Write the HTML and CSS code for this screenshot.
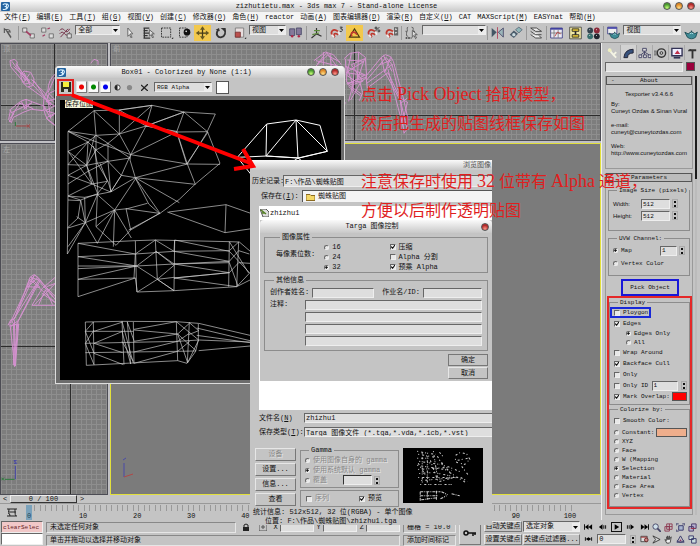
FILE: index.html
```html
<!DOCTYPE html>
<html lang="zh-CN">
<head>
    <meta charset="UTF-8">
    <meta name="viewport" content="width=device-width, initial-scale=1.0">
    <title>zizhutietu.max - 3ds max 7 - Stand-alone License</title>
    <link rel="stylesheet" href="styles.css">
</head>
<body>
    <!-- 公用图形 -->
    <svg class="defs" width="0" height="0" aria-hidden="true">
        <symbol id="logo" viewBox="0 0 10 10">
            <rect width="10" height="10" rx="1" fill="#2464a0"/>
            <path d="M2 3q3-2 4 0t-2 2q3 0 2 2t-4 1M6 2q3 1 2 3t-2 3" fill="none" stroke="#d8f0ff" stroke-width="1.2"/>
        </symbol>
        <symbol id="magnet" viewBox="0 0 18 16">
            <path d="M4 11C1 6 5 3 9 5l3 2M7 13c-2-3-1-5 2-4l2 1" fill="none" stroke="#c0392f" stroke-width="2"/>
            <path d="M3 10l3 3M11 6l2 4" stroke="#eee" stroke-width="2"/>
        </symbol>
        <symbol id="teapot" viewBox="0 0 18 16">
            <path d="M1 7l4 2q4-4 8 0l3-2-2 6q-5 4-10 0z" fill="#3f8b96" stroke="#184850"/>
            <path d="M7 9q2-2 4 0" stroke="#b8ecf0" fill="none"/>
            <circle cx="9" cy="6" r="1" fill="#184850"/>
        </symbol>
    </svg>

    <div class="app">
        <header class="titlebar">
            <svg class="logo"><use href="#logo"/></svg>
            <h1>zizhutietu.max - 3ds max 7 - Stand-alone License</h1>
            <div class="lights">
                <button class="light green" aria-label="最小化"></button>
                <button class="light orange" aria-label="最大化"></button>
                <button class="light red" aria-label="关闭"></button>
            </div>
        </header>

        <nav class="menu">
            <a href="#">文件(<u>F</u>)</a>
            <a href="#">编辑(<u>E</u>)</a>
            <a href="#">工具(<u>T</u>)</a>
            <a href="#">组(<u>G</u>)</a>
            <a href="#">视图(<u>V</u>)</a>
            <a href="#">创建(<u>C</u>)</a>
            <a href="#">修改器(<u>O</u>)</a>
            <a href="#">角色(<u>H</u>)</a>
            <a href="#">reactor</a>
            <a href="#">动画(<u>A</u>)</a>
            <a href="#">图表编辑器(<u>D</u>)</a>
            <a href="#">渲染(<u>R</u>)</a>
            <a href="#">自定义(<u>U</u>)</a>
            <a href="#">CAT</a>
            <a href="#">MAXScript(<u>M</u>)</a>
            <a href="#">EASYnat</a>
            <a href="#">帮助(<u>H</u>)</a>
        </nav>

        <div class="toolbar">
            <button class="tool" aria-label="撤销"><svg viewBox="0 0 18 16"><path d="M4 8V3l3 2M5 4q6-1 6 3L7 6l5 8M8 7l4 6" fill="none" stroke="#555" stroke-width="1.3"/></svg></button>
            <i class="sep"></i>
            <button class="tool" aria-label="链接"><svg viewBox="0 0 18 16"><path d="M2 2h5v5H2zM11 9h5v5h-5z" fill="#ddd" stroke="#666"/><path d="M6 6l6 5" stroke="#a34064" stroke-width="2"/></svg></button>
            <button class="tool" aria-label="取消链接"><svg viewBox="0 0 18 16"><path d="M2 2h5v5H2zM11 9h5v5h-5z" fill="#ddd" stroke="#666"/><path d="M9 3l3-1M6 10l-3 2" stroke="#a34064" stroke-width="1.5"/></svg></button>
            <button class="tool" aria-label="绑定"><svg viewBox="0 0 18 16"><path d="M2 5q3-4 6 0t6-2M2 9q3-4 6 0t6-2M3 13l9-10" fill="none" stroke="#77384e" stroke-width="1.2"/><path d="M11 9h5v5h-5z" fill="#ddd" stroke="#555"/></svg></button>
            <select class="filter" aria-label="选择过滤器"><option>全部</option></select>
            <button class="tool" aria-label="选择"><svg viewBox="0 0 18 16"><path d="M7 2v10l2-2 2 4 1-1-2-4h3z" fill="#eee" stroke="#555"/></svg></button>
            <button class="tool" aria-label="按名称选择"><svg viewBox="0 0 18 16"><path d="M3 2h7M3 5h5M3 8h7M3 11h5M3 14h8M4 2v12" stroke="#333" stroke-width="1.5"/><path d="M10 4v8l2-2 2 4 1-1-2-4h3z" fill="#ddd" stroke="#555"/></svg></button>
            <button class="tool" aria-label="矩形区域"><svg viewBox="0 0 18 16"><path d="M3 2h11v11H3z" fill="none" stroke="#222" stroke-dasharray="2 1"/><path d="M15 15h2v-2z"/></svg></button>
            <button class="tool" aria-label="窗口交叉"><svg viewBox="0 0 18 16"><path d="M3 2h9v11H3z" fill="none" stroke="#222" stroke-dasharray="2 1"/><circle cx="12" cy="7" r="4" fill="#111"/><circle cx="11" cy="6" r="1" fill="#eee"/></svg></button>
            <button class="tool on" aria-label="移动"><svg viewBox="0 0 18 16"><path d="M9 2v12M3 8h12" stroke="#443a18" stroke-width="1.5"/><path d="M9 0l3 4H6zM9 16l3-4H6zM1 8l4-3v6zM17 8l-4-3v6z" fill="#665722"/></svg></button>
            <button class="tool" aria-label="旋转"><svg viewBox="0 0 18 16"><path d="M5 4c-4 6 0 10 4 9s6-6 3-10" fill="none" stroke="#333" stroke-width="2.2"/><path d="M8 2h6v5zM2 4l4-2 1 4z" fill="#333"/></svg></button>
            <button class="tool" aria-label="缩放"><svg viewBox="0 0 18 16"><path d="M4 2h10v11H4z" fill="#e8dede" stroke="#777"/><path d="M4 7h6v6H4z" fill="#bb4f4c" stroke="#733"/><path d="M15 15h2v-2z"/></svg></button>
            <select class="coords" aria-label="参考坐标系"><option>视图</option></select>
            <button class="tool" aria-label="轴点"><svg viewBox="0 0 18 16"><path d="M2 3h6v8H2zM10 2h6v8h-6z" fill="#85799a" stroke="#444666"/><circle cx="5" cy="12" r="1.5" fill="#b02848"/><circle cx="13" cy="12" r="1.5" fill="#b02848"/></svg></button>
            <i class="sep"></i>
            <button class="tool" aria-label="操纵"><svg viewBox="0 0 18 16"><path d="M9 2v7l6 3M9 9l-6 5" fill="none" stroke="#333" stroke-width="1.4"/><path d="M6 5h7M4 10l8-2" stroke="#5c8a3a" stroke-width="1.5"/></svg></button>
            <i class="sep"></i>
            <button class="tool" aria-label="捕捉"><svg viewBox="0 0 18 16"><use href="#magnet"/><path d="M13 1h3L14 3q3 0 2 2t-3 1" fill="none" stroke="#222"/></svg></button>
            <button class="tool on" aria-label="角度捕捉"><svg viewBox="0 0 18 16"><path d="M3 13L9 3l6 10z" fill="none" stroke="#4a3a10" stroke-width="1.4"/><path d="M6 12c-3-5 3-7 6-2" fill="none" stroke="#c0392f" stroke-width="2"/></svg></button>
            <button class="tool" aria-label="百分比捕捉"><svg viewBox="0 0 18 16"><use href="#magnet"/><path d="M11 6l5-5" stroke="#222"/><circle cx="12" cy="2" r="1.2" fill="none" stroke="#222"/><circle cx="15.500" cy="5.500" r="1.200" fill="none" stroke="#222"/></svg></button>
            <button class="tool" aria-label="微调器捕捉"><svg viewBox="0 0 18 16"><use href="#magnet"/><path d="M12 1h5v10h-5z" fill="#666"/><path d="M13 4l1-2 2 2zM13 7l1 2 2-2z" fill="#eee"/></svg></button>
            <i class="sep"></i>
            <button class="tool" aria-label="命名选择集"><svg viewBox="0 0 18 16"><path d="M5 1Q3 1 4 4T2 6q2 0 1 3t2 3M9 1q3 0 2 3t2 2q-2 0-1 3" fill="none" stroke="#555"/><path d="M10 5v8l2-2 2 4 1-1-2-4h3z" fill="#ddd" stroke="#555"/><path d="M2 14h7" stroke="#333" stroke-width="2" stroke-dasharray="2 1"/></svg></button>
            <select class="sets" aria-label="选择集"><option></option></select>
            <i class="sep"></i>
            <button class="tool" aria-label="镜像"><svg viewBox="0 0 18 16"><path d="M2 2l6 5-6 6z" fill="#445765"/><path d="M16 2l-6 5 6 6z" fill="#9bb5b9" stroke="#446"/><path d="M9 1v14" stroke="#b23c55"/></svg></button>
            <button class="tool" aria-label="对齐"><svg viewBox="0 0 18 16"><path d="M2 10l5-5 5 4-5 5z" fill="#4b5c6b"/><path d="M9 4l4-3 4 3-4 4z" fill="#8fb6b8" stroke="#567"/><circle cx="7" cy="10" r="2" fill="#c9dadf"/></svg></button>
            <i class="sep"></i>
            <button class="tool" aria-label="层"><svg viewBox="0 0 18 16"><path d="M2 2h7l6 4H8zM2 6l6 4h7M2 10l6 4h7l-3-3" fill="#eee" stroke="#333"/></svg></button>
            <i class="sep"></i>
            <button class="tool" aria-label="曲线编辑器"><svg viewBox="0 0 18 16"><path d="M2 2h14v12H2z" fill="#eaeaf4" stroke="#3c3c84"/><path d="M2 3h14" stroke="#4040a0" stroke-width="2"/><path d="M6 4v10M2 8h14M11 4v10" stroke="#777"/><path d="M7 12l3-5 4 2" stroke="#b33" fill="none"/></svg></button>
            <button class="tool" aria-label="图解视图"><svg viewBox="0 0 18 16"><path d="M2 1h14v14H2z" fill="#efe6a3" stroke="#444"/><path d="M5 3h8v3H5zM5 10h8v3H5z" fill="#e9c936" stroke="#222"/><path d="M9 6v4" stroke="#222" stroke-width="2"/></svg></button>
            <button class="tool" aria-label="材质编辑器"><svg viewBox="0 0 18 16"><circle cx="5" cy="5" r="3.500" fill="#33424d"/><circle cx="13" cy="5" r="3.500" fill="#8b2839"/><circle cx="5" cy="12" r="3.500" fill="#376e6e"/><circle cx="13" cy="12" r="3.500" fill="#20252f"/><path d="M4 4h1M12 4h1M4 11h1M12 11h1" stroke="#fff"/></svg></button>
            <i class="sep"></i>
            <button class="tool" aria-label="渲染场景"><svg viewBox="0 0 18 16"><path d="M2 1h11v8H2z" fill="#eee" stroke="#3c3c84"/><path d="M2 2h11" stroke="#44a" stroke-width="2"/><use href="#teapot" x="3" y="2" width="15" height="14"/></svg></button>
            <select class="render" aria-label="渲染类型"><option>视图</option></select>
            <button class="tool" aria-label="快速渲染"><svg viewBox="0 0 18 16"><use href="#teapot"/></svg></button>
        </div>

        <div class="main">
            <div class="stage">
                <div class="viewports">
                    <section class="viewport top" aria-label="顶">
                        <svg class="scene" width="108" height="98" viewBox="0 9 324 294">
                            <g class="wire">
                                <path d="M30 62l14-4 8 8-2 12 40 50-14 4-44-52zM36 64l42 60M48 70l34 50M40 80l50 42M62 105l10-12 20 4 10 20-4 20-16 4-14-14zM66 108l34 28M72 98l18 38M90 100L70 128M94 118l68 70M98 134l58 62M84 140l70 50M102 122l50 76"/>
                                <path d="M26 238l6-30 30-24 16-6 20 8 38 14-6 12-36-4-22 8-32 16-6 16zM30 236l30-48M34 218l62-30M64 184l12 24M78 178l2 30M60 190l40 16M96 188l-26 20M28 210l14 14M28 246l14-28"/>
                                <path d="M168 100q-24 20-24 50l-12 24q-6 40 12 66l20 16M164 112l-20 46 20 20-26 6 26 14-28 14 28 8-26 14 26 20M138 184l10-24 16-8M134 202l16 30 14-10M142 166l10 70M272 70l10-12 12 4v12"/>
                            </g>
                            <path class="axis-x" d="M48 258h40m-8-5l10 10m0-10l-10 10"/>
                            <path class="axis-y" d="M46 258v-12"/>
                            <text x="10" y="32" class="vp-name">顶</text>
                        </svg>
                    </section>
                    <section class="viewport front" aria-label="前">
                        <svg class="scene" width="489" height="98" viewBox="-690 9 1467 294">
                            <g class="wire">
                                <path d="M12 56l18-16 26-4 20 16 4 60-20 16 8 30-10 24M16 56l4 70 18 10-12 48M34 40l-14 66 30 20 24-70-40 18 34 50-30 10-18-56M56 36l-4 84 26-8M22 60l50 4-54 34 56 8-52 26 42 30M20 130l50-8M26 140l36 28M60 130l-28 50M44 70l-6 90M14 78l64 28"/>
                                <path d="M78 108l46-56 12-8 16 6 8 14 30 110 12 54-2 40-8 12-12-106-36-76-62 46zM80 120l58-68 18 22-76 56M124 52l10 46 18-46M130 46l26 48M120 74l34-14M136 98l48 90M144 88l48 182M156 72l44 190M184 176l20 12M182 190l20-16M190 236l12-48"/>
                                <path d="M-78 62l34-26 24 8 24 30M-68 72l28-34 40 54M-78 84l40-38 38 20M-50 36v40M-30 40l4 50M-72 62l66 16M14 130l-14 44 16 14-14 26"/>
                            </g>
                            <text x="-680" y="32" class="vp-name">前</text>
                        </svg>
                    </section>
                    <section class="viewport left" aria-label="左">
                        <svg class="scene" width="108" height="351" viewBox="0 309 324 1053">
                            <g class="wire">
                                <path d="M24 856l8-16 12-4 46-124 12-8 12 8 58 74M30 850l52-110 22-36 16 18-66 122-10 136-14-128zM42 838l60-130M52 848l64-128-24-8 28 30-40-2M36 846l70-110M28 858l28-6-10 126-6-126M44 840l-4 136M50 850l-6 124M34 846l20 12M54 842l-22 18M82 742l28-26 50 56M76 750l14-32 76 70M118 720l48 50"/>
                                <path d="M96 796l30-50 42-36M96 796h70M104 794l60-62M116 794l20-44 22 44M126 760l40 28M140 740l26-10"/>
                            </g>
                            <path class="axis-z" d="M46 1318v-40m-4-8h8l-8-8h8"/>
                            <path class="axis-g" d="M44 1318H14m-10-5l8 8m-8 0l8-8"/>
                            <text x="10" y="336" class="vp-name">左</text>
                        </svg>
                    </section>
                    <section class="viewport persp" aria-label="透视">
                        <svg class="scene axis-only" width="40" height="40" viewBox="0 0 40 40">
                            <path d="M14 22V8m-1-3l3-2" stroke="#4a4aa8" fill="none"/>
                            <path d="M14 22l9-3" stroke="#b04848" fill="none"/>
                        </svg>
                    </section>
                </div>

                <div class="timeslider">
                    <button class="step" aria-label="上一帧">&lt;</button>
                    <button class="frame">0 / 100</button>
                    <button class="step" aria-label="下一帧">&gt;</button>
                </div>
                <div class="trackbar">
                    <svg class="curve" viewBox="0 0 10 9"><path d="M0 1h10M0 8h10M2 1q0 3-1 3h8M3 8q0-3-2-3M8 1v3q0 3 1 4" fill="none" stroke="#222"/></svg>
                    <div class="ruler">
                        <span class="now">0</span><span>10</span><span>20</span><span>30</span><span>40</span><span></span><span></span><span></span><span></span><span>90</span><span>100</span>
                    </div>
                </div>
            </div>

            <aside class="panel">
                <div class="tabs">
                    <button aria-label="创建"><svg viewBox="0 0 14 12"><path d="M3 2l5 6 3-3M8 8l3 3" fill="none" stroke="#f4f4e4" stroke-width="2"/><circle cx="4" cy="3" r="2" fill="#eeeec0"/></svg></button>
                    <button class="active" aria-label="修改"><svg viewBox="0 0 14 12"><path d="M2 11Q3 2 12 2v4Q6 6 6 11z" fill="#36517c" stroke="#223"/></svg></button>
                    <button aria-label="层次"><svg viewBox="0 0 14 12"><path d="M5 1h4v3H5zM1 8h3v3H1zM6 8h3v3H6zM11 8h3v3h-3zM7 4v4M7 5L3 8M7 5l5 3" fill="#ddd" stroke="#446"/></svg></button>
                    <button aria-label="运动"><svg viewBox="0 0 14 12"><circle cx="8" cy="6" r="4.500" fill="none" stroke="#333" stroke-width="1.500"/><circle cx="8" cy="6" r="1.500" fill="none" stroke="#333"/><path d="M0 4h3M0 6h3M0 8h3" stroke="#555"/></svg></button>
                    <button aria-label="显示"><svg viewBox="0 0 14 12"><path d="M2 1h11v8H2z" fill="#eef" stroke="#335" stroke-width="1.500"/><path d="M5 7l3-4 3 4z" fill="#c0304a"/><path d="M4 11h7" stroke="#335" stroke-width="2"/></svg></button>
                    <button aria-label="工具"><svg viewBox="0 0 14 12"><path d="M2 4q1-3 4-2h5v2H8v8H6V4z" fill="#333"/></svg></button>
                </div>
                <div class="objname">
                    <input type="text" aria-label="对象名称">
                    <button class="swatch wine" aria-label="对象颜色"></button>
                </div>

                <div class="rollouts">
                    <section class="rollout about">
                        <h2><span>-</span>About</h2>
                        <p class="center">Texporter v3.4.6.6</p>
                        <p>By:<br>Cuneyt Ozdas &amp; Sinan Vural</p>
                        <p>e-mail:<br>cuneyt@cuneytozdas.com</p>
                        <p>Web:<br>http://www.cuneytozdas.com</p>
                    </section>
                    <section class="rollout params">
                        <h2>Parameters</h2>
                        <fieldset class="size">
                            <legend>Image Size (pixels)</legend>
                            <label for="w">Width:</label><input class="spin" id="w" type="text" value="512"><i class="arrows"></i>
                            <label for="h">Height:</label><input class="spin" id="h" type="text" value="512"><i class="arrows"></i>
                        </fieldset>
                        <fieldset class="uvw">
                            <legend>UVW Channel:</legend>
                            <div class="row"><label><input type="radio" name="uvw" checked>Map</label><input class="spin short" type="text" value="1" aria-label="Map"><i class="arrows"></i></div>
                            <div class="row"><label><input type="radio" name="uvw">Vertex Color</label></div>
                        </fieldset>
                        <button class="pick">Pick Object</button>
                        <div class="redbox">
                            <fieldset class="display">
                                <legend>Display</legend>
                                <label class="bluebox"><input type="checkbox">Ploygon</label>
                                <label><input type="checkbox" checked>Edges</label>
                                <label class="sub"><input type="radio" name="edges" checked>Edges Only</label>
                                <label class="sub"><input type="radio" name="edges">All</label>
                                <label><input type="checkbox">Wrap Around</label>
                                <label><input type="checkbox" checked>Backface Cull</label>
                                <label><input type="checkbox">Only</label>
                                <div class="row"><label><input type="checkbox">Only ID</label><input class="spin" type="text" value="1" aria-label="ID"><i class="arrows"></i></div>
                                <div class="row"><label><input type="checkbox" checked>Mark Overlap:</label><button class="swatch pure" aria-label="重叠颜色"></button></div>
                            </fieldset>
                            <fieldset class="colorize">
                                <legend>Colorize by:</legend>
                                <label class="smooth"><input type="checkbox">Smooth Color:</label>
                                <div class="row"><label><input type="radio" name="by">Constant:</label><button class="swatch peach" aria-label="固定颜色"></button></div>
                                <label><input type="radio" name="by">XYZ</label>
                                <label><input type="radio" name="by">Face</label>
                                <label><input type="radio" name="by">W (Mapping</label>
                                <label><input type="radio" name="by" checked>Selection</label>
                                <label><input type="radio" name="by">Material</label>
                                <label><input type="radio" name="by">Face Area</label>
                                <label><input type="radio" name="by">Vertex</label>
                            </fieldset>
                        </div>
                    </section>
                </div>
            </aside>
        </div>

        <footer class="status">
            <div class="listener">
                <input class="macro" type="text" value="clearSelec" aria-label="宏录制器">
                <input type="text" aria-label="侦听器">
            </div>
            <div class="prompts">
                <div class="line">
                    <output class="cell grow">未选定任何对象</output>
                    <svg class="lock" viewBox="0 0 8 8"><path d="M2 4V2q2-2 4 0v2" fill="none" stroke="#222"/><path d="M1 4h6v4H1z" fill="#222"/></svg>
                    <svg class="lock" viewBox="0 0 8 8"><path d="M0 0h8v8H0zM4 2v4M2 4h4" fill="none" stroke="#555"/></svg>
                    <label class="xyz">X<input type="text"></label>
                    <label class="xyz">Y<input type="text"></label>
                    <label class="xyz">Z<input type="text"></label>
                    <output class="cell grid">栅格 = 10.0</output>
                </div>
                <div class="line">
                    <output class="cell grow">单击并拖动以选择并移动对象</output>
                    <output class="cell grid">添加时间标记</output>
                </div>
            </div>
            <button class="key" aria-label="设置关键点"><svg viewBox="0 0 14 8"><circle cx="3" cy="4" r="2" fill="none" stroke="#111" stroke-width="1.500"/><path d="M5 4h8M10 4v3M12 4v2" stroke="#111" stroke-width="1.500"/></svg></button>
            <div class="anim">
                <button>自动关键点</button>
                <select aria-label="关键点集"><option>选定对象</option></select>
                <button>设置关键点</button>
                <button>关键点过滤器...</button>
            </div>
            <div class="transport">
                <div class="line">
                    <button aria-label="转至开头"><svg viewBox="0 0 10 8"><path d="M0 1h1v6H0zM5 1v6L1 4zM9 1v6L5 4z"/></svg></button>
                    <button aria-label="上一帧"><svg viewBox="0 0 10 8"><path d="M5 1v6L1 4zM6 2h1v4H6zM8 2h1v4H8z"/></svg></button>
                    <button class="play" aria-label="播放"><svg viewBox="0 0 10 8"><path d="M3 1v6l5-3z"/></svg></button>
                    <button aria-label="下一帧"><svg viewBox="0 0 10 8"><path d="M5 1v6l4-3zM1 2h1v4H1zM3 2h1v4H3z"/></svg></button>
                    <button aria-label="转至结尾"><svg viewBox="0 0 10 8"><path d="M9 1h1v6H9zM1 1v6l4-3zM5 1v6l4-3z"/></svg></button>
                </div>
                <div class="line">
                    <button aria-label="关键点模式"><svg viewBox="0 0 10 8"><path d="M1 2h1v4H1zM5 2v4L2 4zM5 2v4l3-2zM8 2h1v4H8z"/></svg></button>
                    <input class="spin" type="text" value="0" aria-label="当前帧"><i class="arrows"></i>
                    <button aria-label="时间配置"><svg viewBox="0 0 10 8"><path d="M1 1h7v6H1z" fill="#ddd" stroke="#444"/><path d="M1 2h7" stroke="#a33"/><circle cx="7" cy="5" r="2" fill="#c88" stroke="#622"/></svg></button>
                </div>
            </div>
            <div class="nav">
                <button aria-label="缩放"><svg viewBox="0 0 10 10"><circle cx="4" cy="4" r="3" fill="#cfe0ea" stroke="#446"/><path d="M6 6l4 4" stroke="#446" stroke-width="2"/></svg></button>
                <button aria-label="缩放所有"><svg viewBox="0 0 10 10"><path d="M3 1h6v6H3zM1 4h5v5H1zM6 1v6M3 4h6" fill="none" stroke="#8c3850"/></svg></button>
                <button aria-label="最大化显示"><svg viewBox="0 0 10 10"><path d="M3 3h5v5H3z" fill="#a9b6d0" stroke="#336"/><path d="M0 3V1h3M7 1h3v2M0 7v2h3" fill="none" stroke="#336"/></svg></button>
                <button aria-label="所有视图最大化"><svg viewBox="0 0 10 10"><path d="M4 1h5v5H4zM1 4h5v5H1z" fill="#b7b3d0" stroke="#436"/><path d="M3 6h5" stroke="#a34"/></svg></button>
                <button aria-label="视野"><svg viewBox="0 0 10 10"><path d="M1 1l8 4-8 4 3-4z" fill="#ddd" stroke="#333"/></svg></button>
                <button aria-label="平移"><svg viewBox="0 0 10 10"><path d="M3 9L1 5l2 1V2l1 3V1l1 4 1-4v4l2-3-1 6-1 1z" fill="#eee" stroke="#444"/></svg></button>
                <button aria-label="弧形旋转"><svg viewBox="0 0 10 10"><path d="M5 1l4 7H1zM1 6q4 4 8 0" fill="none" stroke="#336"/><circle cx="5" cy="6" r="1" fill="#836"/></svg></button>
                <button aria-label="最大化视口"><svg viewBox="0 0 10 10"><path d="M1 1h5v4H1zM4 4h5v5H4z" fill="#cdd" stroke="#336"/></svg></button>
            </div>
        </footer>

        <!-- 位图窗口 -->
        <section class="window bitmap">
            <header class="titlebar">
                <svg class="logo"><use href="#logo"/></svg>
                <h1>Box01 - Colorized by None (1:1)</h1>
                <div class="lights">
                    <button class="light green" aria-label="最小化"></button>
                    <button class="light orange" aria-label="最大化"></button>
                    <button class="light red" aria-label="关闭"></button>
                </div>
            </header>
            <div class="bitmap-tools">
                <button class="save" aria-label="保存位图"><svg viewBox="0 0 10 10"><path d="M0 0h10v10H0z" fill="#2b2b1a"/><path d="M2 0h6v5H2z" fill="#f5ee3c"/><path d="M3 7h4v3H3z" fill="#ccc"/></svg></button>
                <button class="chan r" aria-label="红"></button>
                <button class="chan g" aria-label="绿"></button>
                <button class="chan b" aria-label="蓝"></button>
                <button class="plain" aria-label="Alpha"><svg viewBox="0 0 8 8"><circle cx="4" cy="4" r="3" fill="#eee" stroke="#333"/><path d="M4 1a3 3 0 0 0 0 6z" fill="#222"/></svg></button>
                <button class="plain" aria-label="单色"><svg viewBox="0 0 8 8"><circle cx="4" cy="4" r="3" fill="#888"/></svg></button>
                <button class="plain clear" aria-label="清除"><svg viewBox="0 0 8 8"><path d="M0 1l8 7M8 0L0 8" stroke="#222" stroke-width="1.500"/></svg></button>
                <select aria-label="通道"><option>RGB Alpha</option></select>
                <button class="swatch white" aria-label="颜色"></button>
            </div>
            <div class="canvas">
                <svg viewBox="30 120 843 840" width="281" height="280">
                    <g class="mesh">
                        <path d="M54 214l78-62 76-2 98-14 96 20 94 6-24 52 38 96-74 62-48 46-58 42-94 50M54 214v184l-2 184M54 214l84 12 70-4-76-70 6 74M208 150v72l98-86-18 62 114-42-22 60 92-1-70-59M306 136l-98 14 80 48 92 18M402 156l-114 42-80 24 34 62 46-86M288 198l92 16 32 98-170-28 138-68M380 216l30 96 64-96M472 215l-60 97 98 1M412 312l24 61-180-20 156-41M242 284l-2 16 16 53M242 284L54 214"/>
                        <path d="M54 274l60-28 24-20M54 274l56 42M54 214l60 32-4 70 16 56M54 314l56 2 24-88M54 346l56-30 30-6 34-6M54 346l72 26M54 372l60-38 60-30M54 408l72-36 46-8M54 408l50 4 36-8 40-8M114 246l24 24 36-20-36-24v44l-28 46M138 270l36 34V250l66 44-66 10M174 304l40 42-32 50-8-92M214 346l42 7-74 43M110 316l34 88-8-138M174 250l34-28M126 372l56 24 32-50 28-62M54 314l60-68M130 258l12 52 32 54 10 32M150 310l22 54-32 40M54 274l72 98"/>
                        <path d="M54 408l38 12 48-18 54 48 64-96 130 74M54 420l38 2-8 52-32 30M92 420l14 68 36-84M104 412l2 76 88-38 38-4 60-16M54 504l52-16M106 488l-54 94M142 404l-4 96 56-50 50 84M194 450l-4 110M138 500l60 56 44-46-14-64 100 14-86 50M106 488l36 62 52-100M54 560l52-72M256 354l40 78 34 30M256 354l74 106M80 470l26 18"/>
                        <path class="bright" d="M562 292l88-100 88-12 72 16 22 78-84 20-98-6zM650 192l-2 96 90-108 6 114M738 180l94 94M562 292l40 50M648 288l96 6 88-20M744 294l-90 60M744 294l80 60"/>
                        <path d="M356 456l172-22 80 28M528 434l-3 84 80-12M352 456l173 62"/>
                    </g>
                    <g class="mesh" transform="translate(0 480)">
                        <path d="M84 70l172-8 60-2 222 5 30 1 40 34M84 70v160l172-56 6 42 110-4 188-12 40-20M256 62l4 154M84 70l172 32 60-42 6 118-60 38M84 110l176 28M84 138h176M84 146l176-8-176 40 172-4M84 110l172-8 116-8 165-2M260 138l62 40 50-42-54-42-58 44 112-6M256 102l-4 72M316 60l56 34 2-34-2 152-50-34 50-6M318 94l54 38 166 26-166 16M372 94l166 30-166 8M374 60l164 34M372 132l166-4M372 174l188 26M538 65l-2 135M566 66l-6 134M538 65l58 94M538 92l28-26M538 124l28-32 32 10M538 158l28-30 34 2M560 200l40-42M538 128l26 70M538 94l62 66M322 178l50 34M372 174l166-16"/>
                        <path d="M106 306l110-2 163 1 66 5v50l-8 34-26 36-28-8-274 14zM130 306l2 128M216 304l6 130M232 305l10 127M250 306l2 124M379 305l4 117M418 307l-6 122M106 334h144M106 370l278-6 62-4M106 398l276-4 56-1M106 334l24-28M106 334l26 66M106 370l26 64M106 370l26-40M132 334l86-28M132 370l86-36M132 370l86 28M132 400l88 34M216 304l34 126M232 306l20 56M216 334l26 98M216 364l34 60M252 328l127-23M252 364l131-22M252 396l131-32M252 430l131-36M252 330l131 12 35-32M379 305l67 55-33 68M383 342l55 50M383 364l35-24M383 394l36-30M383 342l30 86M418 308l28 24-30 12M446 310l154 36M440 324l160 38M446 360l154 6M446 392l154-14M440 346l160 22"/>
                    </g>
                </svg>
                <span class="tooltip">保存位图</span>
            </div>
        </section>

        <!-- 浏览图像保存对话框 -->
        <section class="window browse">
            <header class="titlebar"><h1>浏览图像</h1></header>
            <div class="history"><label for="hist">历史记录:</label><input id="hist" type="text" value="F:\作品\蜘蛛贴图"></div>
            <div class="savein">
                <span>保存在(<u>I</u>):</span>
                <div class="folder"><svg viewBox="0 0 9 7"><path d="M0 1h4l1 1h4v5H0z" fill="#f4d766" stroke="#8b6a20"/></svg>蜘蛛贴图</div>
            </div>
            <div class="files">
                <div class="file"><svg viewBox="0 0 9 8"><path d="M0 0h6l3 3v5H3z" fill="#ddd" stroke="#555"/><path d="M1 1l5 4M2 4h3" stroke="#568026" stroke-width="1.500"/></svg>zhizhu1</div>
                <section class="targa">
                    <header class="titlebar"><h1>Targa 图像控制</h1><div class="lights"><button class="light red" aria-label="关闭"></button></div></header>
                    <fieldset class="attrs">
                        <legend>图像属性</legend>
                        <span>每像素位数:</span>
                        <div class="stack">
                            <label><input type="radio" name="bits">16</label>
                            <label><input type="radio" name="bits">24</label>
                            <label><input type="radio" name="bits" checked>32</label>
                        </div>
                        <div class="stack">
                            <label><input type="checkbox" checked>压缩</label>
                            <label><input type="checkbox">Alpha 分割</label>
                            <label><input type="checkbox" checked>预乘 Alpha</label>
                        </div>
                    </fieldset>
                    <fieldset class="info">
                        <legend>其他信息</legend>
                        <div class="row">
                            <label for="author">创作者姓名:</label><input id="author" type="text">
                            <label for="job">作业名/ID:</label><input id="job" type="text">
                        </div>
                        <div class="notes">
                            <label for="note">注释:</label>
                            <div class="lines">
                                <input id="note" type="text">
                                <input type="text" aria-label="注释 2">
                                <input type="text" aria-label="注释 3">
                                <input type="text" aria-label="注释 4">
                            </div>
                        </div>
                    </fieldset>
                    <div class="actions"><button class="default">确定</button><button>取消</button></div>
                </section>
            </div>
            <div class="field"><label for="fname">文件名(<u>N</u>)</label><input id="fname" type="text" value="zhizhu1"></div>
            <div class="field"><label for="ftype">保存类型(<u>T</u>):</label><input id="ftype" type="text" value="Targa 图像文件 (*.tga,*.vda,*.icb,*.vst)"></div>
            <div class="bottom">
                <div class="buttons"><button disabled>设备</button><button>设置...</button><button>信息...</button><button>查看</button></div>
                <div class="options">
                    <fieldset class="gamma" disabled>
                        <legend>Gamma</legend>
                        <label><input type="radio" name="gamma">使用图像自身的 gamma</label>
                        <label><input type="radio" name="gamma" checked>使用系统默认 gamma</label>
                        <div class="row"><label><input type="radio" name="gamma">覆盖</label><input class="spin" type="text" aria-label="覆盖"><i class="arrows"></i></div>
                    </fieldset>
                    <div class="seq">
                        <label class="off"><input type="checkbox" disabled>序列</label>
                        <label><input type="checkbox" checked>预览</label>
                    </div>
                </div>
                <svg class="preview" viewBox="0 0 79 54">
                    <g fill="none" stroke="#ccc" stroke-width="1">
                        <path stroke-dasharray="1 3 2 2 1 1" d="M14 3l10 2 8 1M15 6l16 3M14 10h14M16 13l20 3M14 17l14 2 20 3M15 21l30-2M16 25l14-1 20 4M15 29h38M18 32l35-3M17 36h32M24 8v28M30 3l4 26M19 5v30"/>
                        <path stroke-dasharray="2 2 1 3" d="M36 4l4 5M52 7l5-3 6 2 3 5-5 5-8-2-2-5M54 12l10-2M44 18l14 6M58 18l6 8M57 29l7 4M46 24l16 10M34 8l8 14M38 14l10 12M36 33l14-4M15 15l10 16M27 12l8 22"/>
                        <path stroke-dasharray="3 1 1 1" d="M17 43h20M17 47h18M18 51l15-2M17 43v9M24 43v8M33 42v9M38 43l6 3M48 45l8 2M37 50l6-3"/>
                    </g>
                </svg>
            </div>
            <p class="stats">统计信息: 512x512, 32 位(RGBA) - 单个图像</p>
            <p class="stats where">位置: F:\作品\蜘蛛贴图\zhizhu1.tga</p>
        </section>

        <!-- 教程标注 -->
        <svg class="arrow" width="190" height="84" viewBox="0 0 190 84"><path d="M2 4l178 68M173 58l10 17-19 3" fill="none" stroke="#f00" stroke-width="4"/></svg>
        <p class="note first">点击 <b>Pick Object</b> 拾取模型，<br>然后把生成的贴图线框保存如图</p>
        <p class="note second">注意保存时使用 <b>32</b> 位带有 <b>Alpha</b> 通道，<br>方便以后制作透明贴图</p>
    </div>
</body>
</html>
```

FILE: styles.css
```css
* {
    box-sizing: border-box;
}
body {
    margin: 0;
    background: #c4c4c4;
    color: #111;
    font: 7px/9px "Liberation Mono", "Noto Sans CJK SC", monospace;
}
h1, h2, p {
    margin: 0;
    font-size: inherit;
    font-weight: normal;
}
button, input, select {
    font: inherit;
    color: inherit;
    margin: 0;
    padding: 0;
    min-width: 0;
    border-radius: 0;
}
button {
    display: flex;
    align-items: center;
    justify-content: center;
    white-space: nowrap;
    background: #c4c4c4;
    border: 1px solid;
    border-color: #e6e6e6 #777 #777 #e6e6e6;
}
input, select {
    appearance: none;
    height: 10px;
    background: #dedede;
    border: 1px solid;
    border-color: #666 #eee #eee #666;
}
input[type="text"] {
    padding: 0 1px;
}
select {
    padding: 0 2px;
    background: #dedede url("data:image/svg+xml,%3Csvg xmlns='http://www.w3.org/2000/svg' width='7' height='8'%3E%3Cpath d='M0 0h7v8H0z' fill='%23ececec'/%3E%3Cpath d='M1 3h5L3.500 6z'/%3E%3C/svg%3E") no-repeat right center;
}
label {
    display: flex;
    align-items: center;
    gap: 3px;
    white-space: nowrap;
}
input[type="checkbox"], input[type="radio"] {
    flex: none;
    width: 6px;
    height: 6px;
    background: #e8e8e8;
}
input[type="radio"] {
    width: 5px;
    height: 5px;
    border-radius: 50%;
}
input[type="checkbox"]:checked {
    background: #e8e8e8 url("data:image/svg+xml,%3Csvg xmlns='http://www.w3.org/2000/svg' viewBox='0 0 5 5'%3E%3Cpath d='M0 2l2 2 3-4' fill='none' stroke='%23000' stroke-width='1.300'/%3E%3C/svg%3E") center / 100% no-repeat;
}
input[type="radio"]:checked {
    background: radial-gradient(circle, #111 45%, #e8e8e8 55%);
}
fieldset {
    margin: 0;
    padding: 0;
    min-width: 0;
    border: 1px solid #8c8c8c;
}
legend {
    margin-left: 4px;
    padding: 0 2px;
    white-space: nowrap;
}
.defs {
    position: absolute;
}
.app {
    position: relative;
    display: flex;
    flex-direction: column;
    min-height: 100vh;
    overflow: hidden;
}

/* 标题栏与菜单 */
.titlebar {
    display: flex;
    align-items: center;
    height: 12px;
    padding: 0 5px 0 1px;
    background: linear-gradient(#fafafa, #c8c8c8);
}
.titlebar h1 {
    flex: 1;
    text-align: center;
    white-space: nowrap;
}
.logo {
    width: 9px;
    height: 9px;
}
.lights {
    display: flex;
    gap: 4px;
}
.light {
    width: 8px;
    height: 8px;
    border: 1px solid #555;
    border-radius: 50%;
}
.light.green {
    background: radial-gradient(circle at 50% 80%, #c8ff78, #4a9a30 60%);
}
.light.orange {
    background: radial-gradient(circle at 50% 80%, #ffe08a, #e08a28 60%);
}
.light.red {
    background: radial-gradient(circle at 50% 80%, #ff9a8a, #b42a2a 60%);
}
.menu {
    display: flex;
    gap: 6px;
    height: 11px;
    padding: 0 4px;
    line-height: 10px;
    background: #f4f4f4;
}
.menu a {
    color: inherit;
    text-decoration: none;
    white-space: nowrap;
}

/* 主工具栏 */
.toolbar {
    display: flex;
    align-items: center;
    justify-content: space-between;
    height: 20px;
    border-bottom: 1px solid #999;
}
.tool {
    width: 17px;
    height: 16px;
    border: 0;
}
.tool svg {
    width: 15px;
    height: 14px;
}
.tool.on {
    background: #f2c84c;
}
.sep {
    width: 1px;
    height: 14px;
    background: #999;
}
.toolbar select {
    align-self: flex-start;
    margin-top: 2px;
}
.filter {
    width: 45px;
}
.coords {
    width: 37px;
}
.sets {
    width: 64px;
}
.render {
    width: 58px;
}

/* 视口 */
.main {
    flex: 1;
    display: grid;
    grid-template-columns: 1fr 99px;
}
.stage {
    display: flex;
    flex-direction: column;
    min-width: 0;
}
.viewports {
    flex: 1;
    display: grid;
    grid-template: 98px 1fr / 108px 1fr;
    gap: 2px;
    background: #c0c0c4;
}
.viewport {
    overflow: hidden;
    border: 1px solid #4c4c54;
    background-color: #7d7d7d;
}
.top, .front, .left {
    --x: 53px;
    --y: 61px;
    background-image:
        linear-gradient(90deg, transparent var(--x), #2c2c2c var(--x), #2c2c2c calc(var(--x) + 1px), transparent calc(var(--x) + 1px)),
        linear-gradient(transparent var(--y), #2c2c2c var(--y), #2c2c2c calc(var(--y) + 1px), transparent calc(var(--y) + 1px)),
        repeating-linear-gradient(90deg, #8e8e8e 0 1px, transparent 1px 5px),
        repeating-linear-gradient(#8e8e8e 0 1px, transparent 1px 5px);
}
.front {
    --x: 243px;
    --y: 71px;
}
.left {
    --x: 69px;
    --y: 202px;
}
.persp {
    display: flex;
    align-items: flex-end;
    border: 1px solid #e2e03c;
    background: #7b7b7b;
}
.scene {
    display: block;
    margin: -1px;
}
.wire {
    fill: none;
    stroke: #e294dc;
    stroke-width: 3;
    opacity: 0.85;
}
.vp-name {
    font-size: 21px;
    fill: #aaa;
}
.axis-x, .axis-y, .axis-z, .axis-g {
    fill: none;
    stroke: #a34848;
    stroke-width: 3;
}
.axis-y, .axis-g {
    stroke: #2c7a3c;
}
.axis-z {
    stroke: #4444a8;
}

/* 时间轴 */
.timeslider {
    display: flex;
    height: 9px;
    border-bottom: 1px solid #999;
    line-height: 7px;
}
.step {
    width: 10px;
    border: 0;
}
.frame {
    width: 67px;
    border-color: #eee #333 #333 #eee;
}
.trackbar {
    display: flex;
    height: 16px;
    padding-top: 1px;
}
.curve {
    width: 10px;
    height: 9px;
    margin: 3px 9px 0 7px;
}
.ruler {
    flex: 1;
    display: flex;
    justify-content: space-between;
    align-items: flex-end;
    margin-right: 28px;
    line-height: 8px;
    background: repeating-linear-gradient(90deg, #999 0 1px, transparent 1px 1%) 3px 0 / 100% 6px no-repeat;
}
.ruler span {
    display: flex;
    justify-content: center;
    width: 6px;
}
.ruler .now {
    align-self: stretch;
    align-items: flex-end;
    background: #7ba2bb;
    color: #245;
}

/* 命令面板 */
.panel {
    padding: 2px 3px 0;
    border-left: 1px solid #eee;
    font-size: 6px;
}
.tabs {
    display: grid;
    grid-template-columns: repeat(6, 16px);
    height: 15px;
}
.tabs button {
    border: 0;
    border-right: 1px solid #aaa;
}
.tabs .active {
    background: #d2d2d2;
}
.tabs svg {
    width: 13px;
    height: 12px;
}
.objname {
    display: flex;
    gap: 3px;
    margin: 2px 0 4px;
}
.objname input {
    flex: 1;
}
.swatch {
    width: 9px;
    height: 9px;
    border-color: #555;
}
.objname .swatch {
    margin-right: 2px;
}
.wine {
    background: #9a003c;
}
.rollouts {
    border-right: 2px solid #1c1c1c;
    border-image: linear-gradient(#1c1c1c 103px, #bbb 103px) 0 2 0 0;
}
.rollout {
    margin-right: 2px;
    border: 1px solid #999;
    border-top: 0;
}
.rollout h2 {
    position: relative;
    height: 9px;
    line-height: 7px;
    text-align: center;
    background: #bcbcbc;
    border: 1px solid #555;
}
.rollout h2 span {
    position: absolute;
    left: 4px;
}
.about {
    height: 93px;
    margin-bottom: 4px;
    font-family: "Liberation Sans", sans-serif;
    line-height: 7px;
}
.about h2 {
    font-family: "Liberation Mono", monospace;
}
.about p {
    padding: 0 0 7px 5px;
    white-space: nowrap;
}
.about .center {
    padding: 6px 0 3px;
    text-align: center;
}
.params {
    height: 342px;
}
.params fieldset {
    margin: 0 2px;
}
.params legend {
    height: 9px;
}
.size {
    display: grid;
    grid-template-columns: 26px 29px 6px;
    gap: 2px;
    align-content: start;
    height: 45px;
    padding: 4px 4px;
}
.params .size {
    margin-top: 4px;
}
.size label, .uvw label {
    font-family: "Liberation Sans", sans-serif;
}
.spin {
    width: 29px;
}
.arrows {
    flex: none;
    width: 6px;
    height: 9px;
    border: 1px solid #aaa;
    background: conic-gradient(#111 0 0) center 1px / 2px 2px no-repeat, conic-gradient(#111 0 0) center 5px / 2px 2px no-repeat;
}
.row {
    display: flex;
    align-items: center;
    gap: 2px;
}
.params .uvw {
    height: 42px;
    margin-top: 3px;
    padding: 1px 4px;
}
.uvw .row {
    height: 13px;
    justify-content: space-between;
}
.uvw .row label {
    flex: 1;
    font-family: inherit;
}
.short {
    width: 17px;
}
.pick {
    width: 58px;
    height: 17px;
    margin: 3px 0 0 15px;
    border: 2px solid #1818d8;
}
.redbox {
    height: 213px;
    margin: 0 0 0 1px;
    border: 2px solid #e42828;
}
.redbox fieldset {
    margin: 0;
    padding: 0 2px 0 4px;
}
.redbox label, .redbox .row {
    height: 10px;
}
.display {
    height: 107px;
}
.display .row, .display label {
    height: 11px;
}
.display .sub {
    height: 9px;
    padding-left: 12px;
}
.display .bluebox {
    width: 41px;
    margin-left: -4px;
    padding-left: 2px;
    border: 2px solid #1828d8;
}
.redbox .spin {
    width: 26px;
}
.pure {
    width: 17px;
    background: #f00;
}
.display .row, .colorize .row {
    justify-content: space-between;
}
.colorize {
    height: 102px;
}
.colorize label {
    height: 9px;
}
.redbox .smooth {
    height: 13px;
}
.peach {
    width: 31px;
    background: #eeae8c;
}

/* 状态栏 */
.status {
    display: flex;
    gap: 3px;
    height: 26px;
    padding: 1px 2px 0 1px;
}
.listener {
    display: grid;
    width: 42px;
    grid-template-rows: 12px 12px;
}
.listener input {
    width: 42px;
    height: 12px;
    background: #fff;
}
.listener .macro {
    font-size: 6px;
    background: #f1c8c8;
    color: #622;
}
.prompts {
    flex: 1;
    display: grid;
    grid-template-rows: 12px 12px;
    gap: 1px;
}
.line {
    display: flex;
    align-items: center;
    gap: 3px;
}
.cell {
    height: 11px;
    padding: 0 3px;
    border: 1px solid;
    border-color: #888 #e6e6e6 #e6e6e6 #888;
    white-space: nowrap;
    overflow: hidden;
}
.grow {
    flex: 1;
}
.cell.grid {
    width: 53px;
}
.lock {
    width: 8px;
    height: 8px;
    margin: 0 3px;
}
.xyz {
    gap: 2px;
}
.xyz input {
    width: 34px;
    height: 9px;
}
.key {
    width: 22px;
    height: 24px;
}
.key svg {
    width: 14px;
    height: 8px;
}
.anim {
    display: grid;
    grid-template: 11px 11px / 38px 57px;
    gap: 2px 1px;
}
.anim select, .anim button {
    width: 100%;
    height: 11px;
}
.transport {
    display: grid;
    grid-template-rows: 12px 12px;
    width: 64px;
}
.transport .line {
    justify-content: space-between;
}
.transport button {
    width: 11px;
    height: 10px;
    border: 0;
}
.transport .play {
    border: 1px solid #111;
}
.transport svg {
    width: 9px;
    height: 8px;
}
.nav {
    display: grid;
    grid-template: 12px 12px / repeat(4, 12px);
}
.nav button {
    border: 0;
}
.nav svg {
    width: 9px;
    height: 9px;
}

/* 浮动窗口 */
.window {
    position: absolute;
    background: #c4c4c4;
}
.bitmap {
    left: 55px;
    top: 66px;
    width: 290px;
    border: 1px solid #ddd;
    border-top: 0;
    border-radius: 4px 4px 0 0;
    overflow: hidden;
}
.bitmap-tools {
    display: flex;
    align-items: center;
    gap: 1px;
    height: 18px;
    padding-left: 1px;
}
.bitmap-tools .save {
    width: 17px;
    height: 17px;
    margin-right: 1px;
    border: 2px solid #e02020;
}
.save svg {
    width: 10px;
    height: 10px;
}
.chan {
    width: 11px;
    height: 12px;
    background: radial-gradient(circle, #e00 2px, #fafafa 3px);
}
.chan.g {
    background: radial-gradient(circle, #080 2px, #fafafa 3px);
}
.chan.b {
    background: radial-gradient(circle, #00e 2px, #fafafa 3px);
}
.plain {
    width: 11px;
    height: 12px;
    border: 0;
}
.plain svg {
    width: 7px;
    height: 7px;
}
.clear {
    margin: 0 3px;
}
.bitmap-tools select {
    width: 58px;
    font-size: 6px;
}
.white {
    width: 13px;
    height: 13px;
    margin-left: 3px;
    background: #fff;
}
.canvas {
    position: relative;
    padding: 4px 3px 3px 4px;
    background: #6c6c6c;
}
.canvas svg {
    display: block;
    background: #000;
}
.mesh {
    fill: none;
    stroke: #d0d0d0;
    stroke-width: 2;
}
.bright {
    stroke: #fff;
    stroke-width: 3;
}
.tooltip {
    position: absolute;
    left: 9px;
    top: 4px;
    background: #f6f6da;
    line-height: 8px;
}
.browse {
    left: 250px;
    top: 160px;
    width: 242px;
    height: 365px;
    overflow: hidden;
    white-space: nowrap;
}
.browse > .titlebar {
    height: 10px;
    padding: 0 0 0 213px;
    color: #555;
}
.browse > .titlebar h1 {
    text-align: left;
}
.history, .savein, .field {
    display: flex;
    align-items: center;
    height: 14px;
}
.history {
    height: 16px;
    margin-top: 3px;
    padding-left: 2px;
}
.history label {
    width: 31px;
}
.history input, .field input {
    flex: 1;
    border-right: 0;
}
.history input {
    height: 12px;
}
.savein {
    padding-left: 11px;
}
.savein span {
    width: 41px;
}
.folder {
    flex: 1;
    display: flex;
    align-items: center;
    gap: 3px;
    height: 12px;
    padding-left: 3px;
    background: #f4f4f4;
    border: 1px solid #555;
    border-width: 1px 0 0 1px;
}
.folder svg, .file svg {
    width: 9px;
    height: 8px;
}
.files {
    height: 204px;
    margin: 3px 0 1px 9px;
    background: #fff;
}
.file {
    display: flex;
    align-items: center;
    gap: 1px;
    height: 14px;
    padding-left: 1px;
}
.targa {
    margin-left: 1px;
    padding-bottom: 2px;
    background: #c4c4c4;
}
.targa .titlebar {
    height: 13px;
    padding: 0 3px;
    border-radius: 4px 4px 0 0;
}
.targa fieldset {
    margin: 0 4px 3px;
}
.targa legend, .gamma legend {
    height: 9px;
}
.attrs {
    display: flex;
    gap: 9px;
    height: 40px;
    padding-left: 11px;
}
.attrs > span {
    padding-top: 8px;
}
.stack label {
    height: 10px;
}
.stack + .stack {
    margin-left: 40px;
}
.info {
    height: 75px;
    padding: 1px 5px;
}
.info .row {
    height: 13px;
    gap: 3px;
}
.info .row input {
    width: 62px;
}
.info #job {
    flex: 1;
}
.info label[for="job"] {
    margin-left: 5px;
}
.notes {
    display: flex;
    align-items: flex-start;
    margin-top: 1px;
}
.notes label {
    width: 35px;
}
.lines {
    flex: 1;
    display: grid;
    gap: 2px;
}
.actions {
    display: grid;
    justify-content: end;
    gap: 1px;
    padding-right: 4px;
}
.actions button {
    width: 40px;
    height: 12px;
}
.actions .default {
    border-color: #777;
}
.field {
    padding-left: 9px;
}
.field label {
    width: 45px;
    gap: 0;
}
.bottom {
    display: flex;
    gap: 4px;
    height: 60px;
    margin: 9px 9px 0 5px;
}
.buttons {
    display: grid;
    grid-template-rows: repeat(4, 13px);
    gap: 2px;
    width: 41px;
}
button:disabled, .gamma label, .off {
    color: #888;
    text-shadow: 1px 1px #e4e4e4;
}
.options {
    width: 99px;
}
.gamma {
    height: 42px;
    margin-top: -2px;
    padding-left: 4px;
}
.gamma label {
    height: 10px;
}
.gamma .spin {
    margin-left: 14px;
    border-color: #333 #eee #eee #333;
}
.seq {
    display: flex;
    justify-content: space-between;
    height: 17px;
    margin-top: 2px;
    padding: 0 16px 0 5px;
    border: 1px solid #8c8c8c;
}
.preview {
    width: 80px;
    height: 55px;
    background: #000;
}
.stats {
    padding-left: 3px;
}
.where {
    padding-left: 15px;
}

/* 标注 */
.arrow {
    position: absolute;
    left: 70px;
    top: 91px;
}
.note {
    position: absolute;
    left: 361px;
    color: #e01e1e;
    font: 16px/29px "Liberation Serif", "Noto Sans CJK SC", serif;
    white-space: nowrap;
}
.note b {
    font-size: 18px;
    font-weight: normal;
}
.first {
    top: 80px;
}
.second {
    top: 167px;
}
```
